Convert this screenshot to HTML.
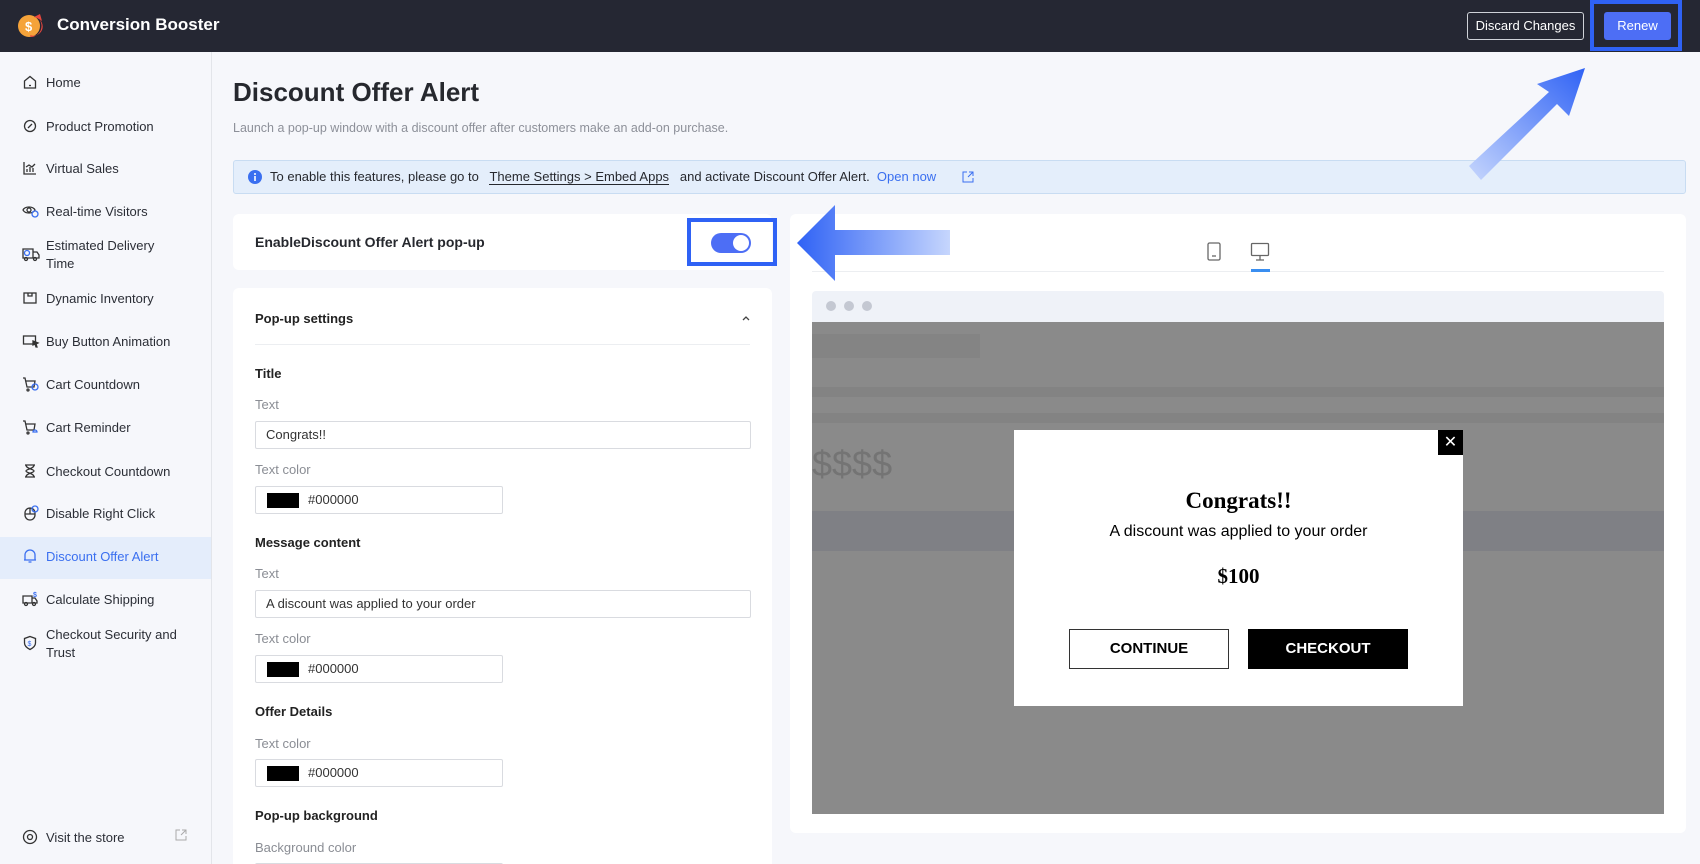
<!DOCTYPE html>
<html><head><meta charset="utf-8"><style>
*{box-sizing:border-box;margin:0;padding:0}
html{width:1700px;height:864px;overflow:hidden}
body{width:1700px;height:864px;overflow:hidden;background:#f6f7fb;font-family:"Liberation Sans",sans-serif;color:#222;position:relative}
.a{position:absolute}
.hdr{left:0;top:0;width:1700px;height:52px;background:#252733}
.sb{left:0;top:52px;width:212px;height:812px;background:#f6f7fb;border-right:1px solid #e3e5ea}
.it{position:absolute;left:0;width:211px;font-size:13px;color:#2b2e36;line-height:18px}
.it span{position:absolute;left:46px}
.it svg{position:absolute;left:22px}
.card{background:#fff;border-radius:6px}
.lbl{position:absolute;left:22px;font-size:13px;color:#8a8d94}
.h{position:absolute;left:22px;font-size:13px;font-weight:bold;color:#222}
.inp{position:absolute;left:22px;height:28px;border:1px solid #d9dbe0;border-radius:2px;background:#fff;font-size:13px;line-height:26px;padding-left:10px;color:#333}
.ci{width:248px;padding-left:52px}
.ci i{position:absolute;left:11px;top:6px;width:32px;height:15px;background:#000}
</style></head><body>
<div class="a hdr">
 <svg class="a" style="left:17px;top:13px" width="28" height="26" viewBox="0 0 28 26"><circle cx="12" cy="13" r="11" fill="#f5a33a"/><path d="M14 24 A11 11 0 0 0 22 6 L25 8 L23 1 L17 4 L20 5 A9 9 0 0 1 13 22Z" fill="#e8473e"/><text x="8" y="18" font-size="13" fill="#fff" font-family="Liberation Sans" font-weight="bold">$</text></svg>
 <div class="a" style="left:57px;top:15px;font-size:17px;font-weight:bold;color:#fff">Conversion Booster</div>
 <div class="a" style="left:1467px;top:12px;width:117px;height:28px;border:1px solid #cfd2d8;border-radius:3px;color:#fff;font-size:13px;text-align:center;line-height:26px">Discard Changes</div>
 <div class="a" style="left:1590px;top:0;width:92px;height:51px;border:4px solid #2f62f5"></div>
 <div class="a" style="left:1604px;top:12px;width:67px;height:28px;background:#4d6ef5;border-radius:3px;color:#fff;font-size:13px;text-align:center;line-height:28px">Renew</div>
</div>
<div class="a sb">
 <div class="a" style="left:0;top:485px;width:211px;height:42px;background:#e4edfb"></div>
</div>
<div class="it" style="top:74px"><svg width="16" height="16" viewBox="0 0 16 16" fill="none" stroke="#333" stroke-width="1.3"><path d="M2.5 7L8 2.5 13.5 7V14H2.5Z"/><path d="M7 11.5h2"/></svg><span>Home</span></div>
<div class="it" style="top:118px"><svg width="16" height="16" viewBox="0 0 16 16" fill="none" stroke="#333" stroke-width="1.3"><circle cx="8" cy="8" r="5.5"/><path d="M6 10l4-4"/></svg><span>Product Promotion</span></div>
<div class="it" style="top:160px"><svg width="16" height="16" viewBox="0 0 16 16" fill="none" stroke="#333" stroke-width="1.3"><path d="M2 2v12h12M5 12V9M8 12V7M11 12V8M4 7l3-2 3 2 3-3"/></svg><span>Virtual Sales</span></div>
<div class="it" style="top:203px"><svg width="18" height="16" viewBox="0 0 18 16" fill="none" stroke="#333" stroke-width="1.3"><path d="M1 7c2-4 10-4 12 0-2 4-10 4-12 0z"/><circle cx="7" cy="7" r="2"/><circle cx="13" cy="11" r="3" stroke="#3a6ff0"/></svg><span>Real-time Visitors</span></div>
<div class="it" style="top:237px;height:36px"><svg style="top:9px" width="18" height="16" viewBox="0 0 18 16" fill="none" stroke="#333" stroke-width="1.3"><path d="M1 3h10v9H1zM11 6h4l2 3v3h-6"/><circle cx="4" cy="13" r="1.5"/><circle cx="13" cy="13" r="1.5"/><circle cx="5" cy="7" r="2.5" stroke="#3a6ff0"/></svg><span>Estimated Delivery<br>Time</span></div>
<div class="it" style="top:290px"><svg width="16" height="16" viewBox="0 0 16 16" fill="none" stroke="#333" stroke-width="1.3"><rect x="2" y="3" width="12" height="10"/><path d="M6 3v3h4V3"/></svg><span>Dynamic Inventory</span></div>
<div class="it" style="top:333px"><svg width="18" height="16" viewBox="0 0 18 16" fill="none" stroke="#333" stroke-width="1.3"><rect x="1.5" y="3" width="12" height="8"/><path d="M11 8l5 2-2 1 1 3-1 0-1-3-2 1z" fill="#333"/></svg><span>Buy Button Animation</span></div>
<div class="it" style="top:376px"><svg width="18" height="16" viewBox="0 0 18 16" fill="none" stroke="#333" stroke-width="1.3"><path d="M1 2h2l2 9h7l1-6H4"/><circle cx="6" cy="14" r="1"/><circle cx="13" cy="11" r="3" stroke="#3a6ff0"/></svg><span>Cart Countdown</span></div>
<div class="it" style="top:419px"><svg width="18" height="16" viewBox="0 0 18 16" fill="none" stroke="#333" stroke-width="1.3"><path d="M1 2h2l2 9h7l1-6H4"/><circle cx="6" cy="14" r="1"/><path d="M11 13a2 2 0 0 1 4 0z" stroke="#3a6ff0"/></svg><span>Cart Reminder</span></div>
<div class="it" style="top:463px"><svg width="16" height="16" viewBox="0 0 16 16" fill="none" stroke="#333" stroke-width="1.3"><path d="M3 2h10M3 14h10M4 2c0 4 8 4 8 6s-8 2-8 6M12 2c0 4-8 4-8 6s8 2 8 6"/></svg><span>Checkout Countdown</span></div>
<div class="it" style="top:505px"><svg width="18" height="16" viewBox="0 0 18 16" fill="none" stroke="#333" stroke-width="1.3"><path d="M3 8a5 5 0 0 1 10 0v2a5 5 0 0 1-10 0zM3 9h10M8 3v6"/><circle cx="13" cy="4" r="3" stroke="#3a6ff0"/></svg><span>Disable Right Click</span></div>
<div class="it" style="top:548px;color:#3a6ff0"><svg width="16" height="16" viewBox="0 0 16 16" fill="none" stroke="#3a6ff0" stroke-width="1.3"><path d="M3 12V7a5 5 0 0 1 10 0v5zM2 12h12M6.5 14h3"/></svg><span>Discount Offer Alert</span></div>
<div class="it" style="top:591px"><svg width="18" height="16" viewBox="0 0 18 16" fill="none" stroke="#333" stroke-width="1.3"><path d="M1 5h9v7H1zM10 7h3l2 3v2h-5"/><circle cx="4" cy="13" r="1.5"/><circle cx="12" cy="13" r="1.5"/><text x="11" y="6" font-size="7" fill="#3a6ff0" stroke="none" font-weight="bold">$</text></svg><span>Calculate Shipping</span></div>
<div class="it" style="top:626px;height:36px"><svg style="top:9px" width="16" height="16" viewBox="0 0 16 16" fill="none" stroke="#333" stroke-width="1.3"><path d="M8 1.5l5.5 2V8c0 3-2.5 5-5.5 6.5C5 13 2.5 11 2.5 8V3.5z"/><text x="5.5" y="11" font-size="7" fill="#3a6ff0" stroke="none">$</text></svg><span>Checkout Security and<br>Trust</span></div>
<div class="it" style="top:829px"><svg width="16" height="16" viewBox="0 0 16 16" fill="none" stroke="#333" stroke-width="1.3"><circle cx="8" cy="8" r="6.5"/><circle cx="8" cy="8" r="2.5"/></svg><span>Visit the store</span><svg style="left:175px" width="12" height="12" viewBox="0 0 12 12" fill="none" stroke="#aaa" stroke-width="1"><path d="M5 1H1v10h10V7M7 1h4v4M11 1L6 6"/></svg></div>

<div class="a" style="left:233px;top:77px;font-size:26px;font-weight:bold;color:#26282e">Discount Offer Alert</div>
<div class="a" style="left:233px;top:121px;font-size:12.5px;color:#8d9099">Launch a pop-up window with a discount offer after customers make an add-on purchase.</div>
<div class="a" style="left:233px;top:160px;width:1453px;height:34px;background:#e4eefb;border:1px solid #c8dcf2;border-radius:3px"></div>
<svg class="a" style="left:248px;top:170px" width="14" height="14" viewBox="0 0 14 14"><circle cx="7" cy="7" r="7" fill="#3a6ff0"/><rect x="6.2" y="6" width="1.6" height="5" fill="#fff"/><circle cx="7" cy="4" r="1" fill="#fff"/></svg>
<div class="a" style="left:270px;top:169px;font-size:13px;color:#26282e;white-space:nowrap">To enable this features, please go to &nbsp; <span style="border-bottom:1px solid #26282e">Theme Settings &gt; Embed Apps</span> &nbsp; and activate Discount Offer Alert. &nbsp;<span style="color:#3a6ff0">Open now</span></div>
<svg class="a" style="left:962px;top:171px" width="12" height="12" viewBox="0 0 12 12" fill="none" stroke="#3a6ff0" stroke-width="1"><path d="M5 1H1v10h10V7M7 1h4v4M11 1L6 6"/></svg>

<div class="a card" style="left:233px;top:214px;width:539px;height:56px"></div>
<div class="a" style="left:255px;top:234px;font-size:14px;font-weight:bold;color:#26282e">EnableDiscount Offer Alert pop-up</div>
<div class="a" style="left:687px;top:218px;width:90px;height:48px;border:4px solid #2f62f5"></div>
<div class="a" style="left:711px;top:233px;width:40px;height:20px;border-radius:10px;background:#4d6ef5"></div>
<div class="a" style="left:733px;top:235px;width:16px;height:16px;border-radius:8px;background:#fff"></div>

<div class="a card" style="left:233px;top:288px;width:539px;height:600px">
 <div class="h" style="top:23px">Pop-up settings</div>
 <svg class="a" style="left:508px;top:26px" width="10" height="8" viewBox="0 0 10 8" fill="none" stroke="#444" stroke-width="1.3"><path d="M2 6l3-3 3 3"/></svg>
 <div class="a" style="left:22px;top:56px;width:495px;height:1px;background:#eceef1"></div>
 <div class="h" style="top:78px">Title</div>
 <div class="lbl" style="top:109px">Text</div>
 <div class="inp" style="top:133px;width:496px">Congrats!!</div>
 <div class="lbl" style="top:174px">Text color</div>
 <div class="inp ci" style="top:198px"><i></i>#000000</div>
 <div class="h" style="top:247px">Message content</div>
 <div class="lbl" style="top:278px">Text</div>
 <div class="inp" style="top:302px;width:496px">A discount was applied to your order</div>
 <div class="lbl" style="top:343px">Text color</div>
 <div class="inp ci" style="top:367px"><i></i>#000000</div>
 <div class="h" style="top:416px">Offer Details</div>
 <div class="lbl" style="top:448px">Text color</div>
 <div class="inp ci" style="top:471px"><i></i>#000000</div>
 <div class="h" style="top:520px">Pop-up background</div>
 <div class="lbl" style="top:552px">Background color</div>
 <div class="inp ci" style="top:575px"><i></i></div>
</div>

<div class="a card" style="left:790px;top:214px;width:896px;height:619px"></div>
<svg class="a" style="left:1206px;top:242px" width="16" height="20" viewBox="0 0 16 20" fill="none" stroke="#666" stroke-width="1.3"><rect x="2" y="1" width="12" height="17" rx="1.5"/><path d="M6 14h4"/></svg>
<svg class="a" style="left:1250px;top:242px" width="20" height="20" viewBox="0 0 20 20" fill="none" stroke="#666" stroke-width="1.3"><rect x="1.5" y="1.5" width="17" height="12" rx="1"/><path d="M10 14v4M6 18h8"/></svg>
<div class="a" style="left:812px;top:271px;width:852px;height:1px;background:#eceef1"></div>
<div class="a" style="left:1251px;top:269px;width:19px;height:3px;background:#3a8ef0"></div>
<div class="a" style="left:812px;top:291px;width:852px;height:31px;background:#eff2f8;border-radius:4px 4px 0 0"></div>
<div class="a" style="left:826px;top:301px;width:10px;height:10px;border-radius:5px;background:#c4c8d2"></div>
<div class="a" style="left:844px;top:301px;width:10px;height:10px;border-radius:5px;background:#c4c8d2"></div>
<div class="a" style="left:862px;top:301px;width:10px;height:10px;border-radius:5px;background:#c4c8d2"></div>
<div class="a" style="left:812px;top:322px;width:852px;height:492px;background:#8a8a8a"></div>
<div class="a" style="left:812px;top:334px;width:168px;height:24px;background:#848484"></div>
<div class="a" style="left:812px;top:387px;width:852px;height:10px;background:#838383"></div>
<div class="a" style="left:812px;top:413px;width:852px;height:10px;background:#838383"></div>
<div class="a" style="left:812px;top:443px;font-size:36px;color:#747474">$$$$</div>
<div class="a" style="left:812px;top:511px;width:852px;height:40px;background:#7f8085"></div>
<div class="a" style="left:1014px;top:430px;width:449px;height:276px;background:#fff"></div>
<div class="a" style="left:1438px;top:430px;width:25px;height:25px;background:#000;color:#fff;font-size:16px;text-align:center;line-height:25px">✕</div>
<div class="a" style="left:1014px;top:488px;width:449px;text-align:center;font-family:'Liberation Serif',serif;font-weight:bold;font-size:23px;color:#000">Congrats!!</div>
<div class="a" style="left:1014px;top:523px;width:449px;text-align:center;font-size:16px;color:#000">A discount was applied to your order</div>
<div class="a" style="left:1014px;top:564px;width:449px;text-align:center;font-family:'Liberation Serif',serif;font-weight:bold;font-size:21px;color:#000">$100</div>
<div class="a" style="left:1069px;top:629px;width:160px;height:40px;border:1px solid #333;text-align:center;line-height:38px;font-size:15px;font-weight:bold;color:#000">CONTINUE</div>
<div class="a" style="left:1248px;top:629px;width:160px;height:40px;background:#000;text-align:center;line-height:40px;font-size:15px;font-weight:bold;color:#fff">CHECKOUT</div>

<svg class="a" style="left:795px;top:203px" width="160" height="80" viewBox="0 0 160 80"><defs><linearGradient id="g1" x1="0" x2="1"><stop offset="0" stop-color="#2f62f5"/><stop offset="1" stop-color="#c6d6fd"/></linearGradient><linearGradient id="g2" x1="0" y1="1" x2="1" y2="0"><stop offset="0" stop-color="#c6d6fd"/><stop offset="1" stop-color="#2f62f5"/></linearGradient></defs><polygon points="2,40 40,2 40,27 155,27 155,52 40,52 40,78" fill="url(#g1)"/></svg>
<svg class="a" style="left:1465px;top:64px" width="125" height="120" viewBox="0 0 125 120"><polygon points="4,102 16,116 92,40 104,52 120,4 72,20 84,28" fill="url(#g2)"/></svg>
</body></html>
